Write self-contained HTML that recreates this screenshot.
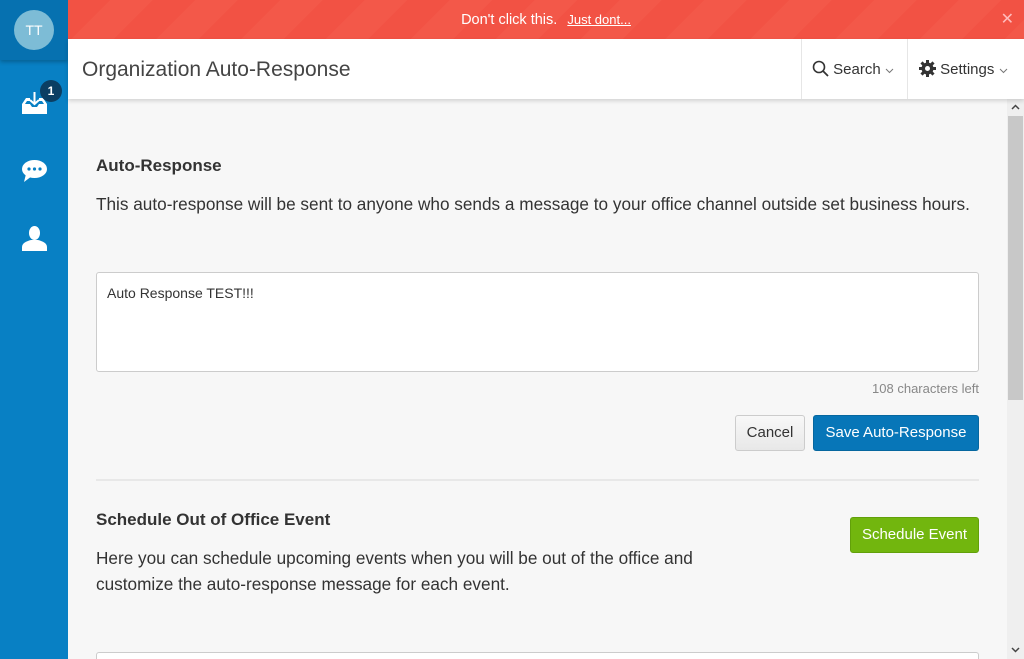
<!DOCTYPE html>
<html><head><meta charset="utf-8"><style>
*{box-sizing:border-box;margin:0;padding:0}
html{width:1024px;height:659px;overflow:hidden}
body{width:1024px;height:659px;overflow:hidden;background:#f7f7f7;font-family:"Liberation Sans",sans-serif;position:relative;color:#333}
.side{position:absolute;left:0;top:0;width:68px;height:659px;background:#0880c4}
.avt{position:absolute;left:0;top:0;width:68px;height:60px;background:#0671b0;box-shadow:0 2px 4px rgba(0,0,0,.25)}
.avt div{position:absolute;left:14px;top:10px;width:40px;height:40px;border-radius:50%;background:#7dbcd6;color:#fff;font-size:14px;text-align:center;line-height:40px}
.badge{position:absolute;left:40px;top:80px;width:22px;height:22px;border-radius:50%;background:#0b3e63;color:#fff;font-size:12px;font-weight:bold;text-align:center;line-height:22px}
.banner{position:absolute;left:68px;top:0;right:0;height:39px;background:repeating-linear-gradient(135deg,#f25244 0 30px,#f35849 30px 60px);color:#fff;font-size:14.5px;text-align:center;line-height:39px}
.banner u{font-size:13px;margin-left:6px}
.x{position:absolute;right:10px;top:0;color:#fbb;font-size:16px}
.hdr{position:absolute;left:68px;top:39px;right:0;height:60px;background:#fff;box-shadow:0 2px 4px rgba(0,0,0,.15);z-index:2}
.hdr h1{position:absolute;left:14px;top:19px;font-weight:normal;font-size:21px;color:#444}
.nav{position:absolute;top:0;height:60px;border-left:1px solid #e6e6e6;font-size:15px;line-height:62px;color:#333}
.sb{position:absolute;left:1007px;top:99px;width:17px;bottom:0;background:#efefef}
.th{position:absolute;left:1px;top:17px;width:15px;height:284px;background:#c8c8c8}
.h2{position:absolute;left:96px;font-size:17px;font-weight:bold;color:#333}
.p{position:absolute;left:96px;font-size:17.2px;color:#333;line-height:26px}
.ta{position:absolute;left:96px;top:272px;width:883px;height:100px;background:#fff;border:1px solid #ccc;border-radius:3px;padding:12px 10px;font-size:14px}
.btn{position:absolute;height:36px;border-radius:3px;font-size:15px;line-height:34px;text-align:center}
</style></head><body>
<div class="side">
<div class="avt"><div>TT</div></div>
<svg style="position:absolute;left:22px;top:92px" width="25" height="22" viewBox="0 0 25 22"><path d="M0 12 L4 6 H8 V9 H5 L3 12 H8 L10 15 H15 L17 12 H22 L20 9 H17 V6 H21 L25 12 V22 H0Z" fill="#fff"/><path d="M12.5 0 V12 M8 8 L12.5 12 L17 8" stroke="#fff" stroke-width="2" fill="none"/></svg>
<div class="badge">1</div>
<svg style="position:absolute;left:22px;top:160px" width="25" height="23" viewBox="0 0 25 23"><ellipse cx="12.5" cy="9" rx="12.5" ry="9" fill="#fff"/><path d="M4 14 L2 22 L10 16Z" fill="#fff"/><circle cx="7" cy="9" r="1.6" fill="#0880c4"/><circle cx="12.5" cy="9" r="1.6" fill="#0880c4"/><circle cx="18" cy="9" r="1.6" fill="#0880c4"/></svg>
<svg style="position:absolute;left:22px;top:226px" width="25" height="25" viewBox="0 0 25 25"><ellipse cx="12.5" cy="7" rx="5.5" ry="7" fill="#fff"/><path d="M0 25 V21 C0 17 5 15 9 14 H16 C20 15 25 17 25 21 V25Z" fill="#fff"/></svg>
</div>
<div class="banner">Don't click this. <u>Just dont...</u><span class="x">✕</span></div>
<div class="hdr"><h1>Organization Auto-Response</h1>
<div class="nav" style="left:733px;width:106px;padding-left:10px">
<svg width="17" height="17" viewBox="0 0 17 17" style="vertical-align:-3px"><circle cx="7" cy="7" r="5.5" stroke="#333" stroke-width="1.6" fill="none"/><path d="M11 11 L16 16" stroke="#333" stroke-width="1.8"/></svg> Search <svg width="9" height="6" viewBox="0 0 9 6"><path d="M1 1 L4.5 4.5 L8 1" stroke="#777" fill="none"/></svg></div>
<div class="nav" style="left:839px;right:0;padding-left:11px">
<svg width="17" height="17" viewBox="0 0 17 17" style="vertical-align:-3px"><g fill="#333"><circle cx="8.5" cy="8.5" r="6"/><rect x="7" y="0" width="3" height="17"/><rect x="0" y="7" width="17" height="3"/><rect x="7" y="0" width="3" height="17" transform="rotate(45 8.5 8.5)"/><rect x="7" y="0" width="3" height="17" transform="rotate(-45 8.5 8.5)"/></g><circle cx="8.5" cy="8.5" r="2.5" fill="#fff"/></svg> Settings <svg width="9" height="6" viewBox="0 0 9 6"><path d="M1 1 L4.5 4.5 L8 1" stroke="#777" fill="none"/></svg></div>
</div>
<div class="sb"><div class="th"></div><svg style="position:absolute;top:5px;left:4px" width="9" height="6" viewBox="0 0 9 6"><path d="M1 5 L4.5 1.5 L8 5" stroke="#444" stroke-width="1.5" fill="none"/></svg><svg style="position:absolute;bottom:6px;left:4px" width="9" height="6" viewBox="0 0 9 6"><path d="M1 1 L4.5 4.5 L8 1" stroke="#444" stroke-width="1.5" fill="none"/></svg></div>
<div class="h2" style="top:156px">Auto-Response</div>
<div class="p" style="top:191px">This auto-response will be sent to anyone who sends a message to your office channel outside set business hours.</div>
<div class="ta">Auto Response TEST!!!</div>
<div style="position:absolute;right:45px;top:381px;font-size:13px;color:#888">108 characters left</div>
<div class="btn" style="left:735px;top:415px;width:70px;background:linear-gradient(#f8f8f8,#e8e8e8);border:1px solid #ccc;color:#333">Cancel</div>
<div class="btn" style="left:813px;top:415px;width:166px;background:#0776b8;border:1px solid #06679f;color:#fff">Save Auto-Response</div>
<div style="position:absolute;left:96px;top:479px;width:883px;height:2px;background:#e8e8e8"></div>
<div class="h2" style="top:510px">Schedule Out of Office Event</div>
<div class="btn" style="left:850px;top:517px;width:129px;background:#72b60e;border:1px solid #62a00a;color:#fff">Schedule Event</div>
<div class="p" style="top:545px">Here you can schedule upcoming events when you will be out of the office and<br>customize the auto-response message for each event.</div>
<div style="position:absolute;left:96px;top:652px;width:883px;height:7px;background:#fff;border:1px solid #ccc;border-bottom:none;border-radius:3px 3px 0 0"></div>
</body></html>
